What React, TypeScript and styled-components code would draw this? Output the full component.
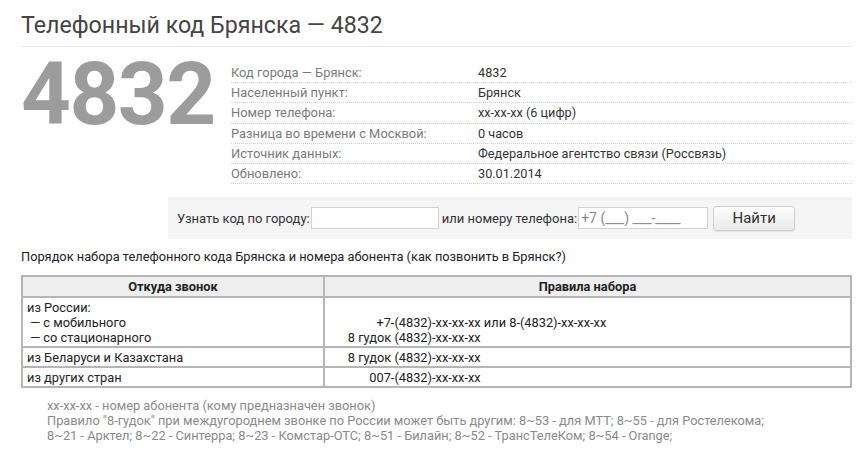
import React from "react";
import styled, { createGlobalStyle } from "styled-components";

const Global = createGlobalStyle`
  html, body { margin: 0; padding: 0; background: #fff; }
  body { font-family: Roboto, "Noto Sans", Arial, sans-serif; color: #333; }
  * { box-sizing: border-box; }
`;

const Page = styled.div`
  width: 860px;
  padding: 0 8px 0 21px;
`;

const Title = styled.h1`
  margin: 0;
  padding-top: 10px;
  height: 47px;
  font-size: 23.2px;
  font-weight: 400;
  line-height: 30px;
  color: #444;
  border-bottom: 1px solid #e6e6e6;
`;

const Top = styled.div`
  display: flex;
  align-items: flex-start;
  padding-top: 16px;
`;

const BigCode = styled.div`
  width: 210px;
  flex: none;
  margin-top: -12px;
  font-size: 87px;
  font-weight: 700;
  line-height: 1;
  color: #9c9c9c;
  letter-spacing: -1.5px;
`;

const Info = styled.div`
  flex: 1;
`;

const InfoRow = styled.div`
  display: grid;
  grid-template-columns: 247px 1fr;
  height: 20.2px;
  font-size: 12.9px;
  line-height: 19px;
  border-bottom: 1px dotted #cfcfcf;
`;

const Label = styled.span`
  color: #7a7a7a;
`;

const Value = styled.span`
  color: #333;
  font-size: 12.7px;
`;

const Search = styled.form`
  display: flex;
  align-items: center;
  margin: 13px 0 0 147px;
  height: 42px;
  padding: 0 9px;
  background: #f5f5f5;
  font-size: 13px;
  color: #333;
`;

const Field = styled.input<{ $w: number }>`
  width: ${(p) => p.$w}px;
  height: 22px;
  margin: 0 3px 0 1px;
  border: 1px solid #d2d2d2;
  background: #fff;
  font-family: inherit;
  font-size: 14px;
  padding: 0 2px;
  color: #333;
  &::placeholder { color: #8a8a8a; }
`;

const Button = styled.button`
  width: 82px;
  height: 25px;
  margin-left: 2px;
  border: 1px solid #cfcfcf;
  border-radius: 3px;
  background: linear-gradient(#fdfdfd, #e9e9e9);
  font-family: inherit;
  font-size: 15px;
  color: #333;
  box-shadow: 0 1px 1px rgba(0,0,0,0.08);
`;

const Intro = styled.p`
  margin: 10px 0 0;
  font-size: 12.8px;
  line-height: 16px;
  color: #222;
`;

const Table = styled.table`
  width: 831px;
  margin-top: 10px;
  border-collapse: collapse;
  font-size: 12.8px;
  line-height: 15px;
  color: #222;
`;

const Th = styled.th`
  height: 21px;
  padding: 1px 4px;
  background: #eeeeee;
  border: 2px solid #b5b5b5;
  font-weight: 700;
  text-align: center;
  &:first-child { width: 302px; }
`;

const Td = styled.td`
  padding: 2px 4px 1px;
  border: 2px solid #b5b5b5;
  vertical-align: top;
`;

const Rule = styled.div`
  display: flex;
  white-space: pre;
`;

const Prefix = styled.span`
  display: inline-block;
  width: 103px;
  text-align: right;
`;

const Notes = styled.div`
  margin: 10px 0 0 26px;
  font-size: 12.8px;
  line-height: 15px;
  color: #8a8a8a;
`;

const info: [string, string][] = [
  ["Код города — Брянск:", "4832"],
  ["Населенный пункт:", "Брянск"],
  ["Номер телефона:", "xx-xx-xx (6 цифр)"],
  ["Разница во времени с Москвой:", "0 часов"],
  ["Источник данных:", "Федеральное агентство связи (Россвязь)"],
  ["Обновлено:", "30.01.2014"],
];

function DialRule({ prefix, rest }: { prefix: string; rest: string }) {
  return (
    <Rule>
      <Prefix>{prefix}</Prefix>
      <span>{rest}</span>
    </Rule>
  );
}

export default function App() {
  return (
    <Page>
      <Global />
      <Title>Телефонный код Брянска — 4832</Title>
      <Top>
        <BigCode>4832</BigCode>
        <Info>
          {info.map(([l, v]) => (
            <InfoRow key={l}>
              <Label>{l}</Label>
              <Value>{v}</Value>
            </InfoRow>
          ))}
        </Info>
      </Top>
      <Search onSubmit={(e) => e.preventDefault()}>
        Узнать код по городу:
        <Field $w={128} type="text" />
        или номеру телефона:
        <Field $w={130} type="text" placeholder="+7 (___) ___-____" />
        <Button type="submit">Найти</Button>
      </Search>
      <Intro>Порядок набора телефонного кода Брянска и номера абонента (как позвонить в Брянск?)</Intro>
      <Table>
        <thead>
          <tr>
            <Th>Откуда звонок</Th>
            <Th>Правила набора</Th>
          </tr>
        </thead>
        <tbody>
          <tr>
            <Td>
              из России:
              <br />
              {"\u00a0— с мобильного"}
              <br />
              {"\u00a0— со стационарного"}
            </Td>
            <Td>
              <br />
              <DialRule prefix="+7-(4832)" rest="-xx-xx-xx или 8-(4832)-xx-xx-xx" />
              <DialRule prefix="8 гудок (4832)" rest="-xx-xx-xx" />
            </Td>
          </tr>
          <tr>
            <Td>из Беларуси и Казахстана</Td>
            <Td>
              <DialRule prefix="8 гудок (4832)" rest="-xx-xx-xx" />
            </Td>
          </tr>
          <tr>
            <Td>из других стран</Td>
            <Td>
              <DialRule prefix="007-(4832)" rest="-xx-xx-xx" />
            </Td>
          </tr>
        </tbody>
      </Table>
      <Notes>
        xx-xx-xx - номер абонента (кому предназначен звонок)
        <br />
        Правило "8-гудок" при междугороднем звонке по России может быть другим: 8~53 - для МТТ; 8~55 - для Ростелекома;
        <br />
        8~21 - Арктел; 8~22 - Синтерра; 8~23 - Комстар-ОТС; 8~51 - Билайн; 8~52 - ТрансТелеКом; 8~54 - Orange;
      </Notes>
    </Page>
  );
}
